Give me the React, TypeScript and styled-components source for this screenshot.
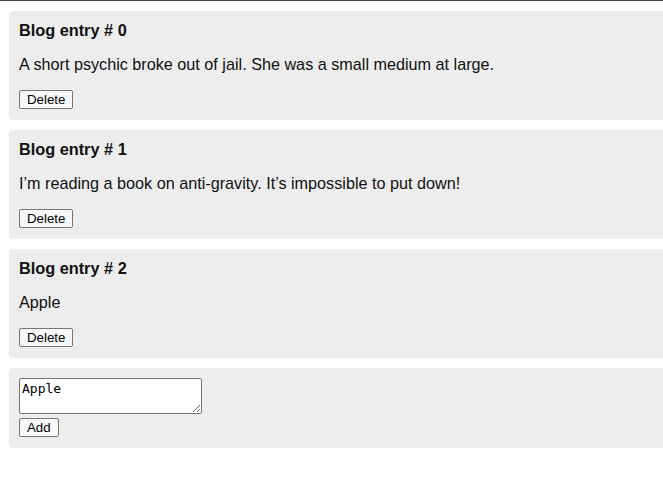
import React, { useState } from 'react';
import styled, { createGlobalStyle } from 'styled-components';

const GlobalStyle = createGlobalStyle`
  body {
    margin: 0;
    font-family: "Liberation Sans", Arial, sans-serif;
    color: #111;
    background: #fff;
    overflow: hidden;
  }
`;

const Page = styled.div`
  border-top: 1px solid #444;
  padding: 10px 0 0 9px;
  display: flex;
  flex-direction: column;
  gap: 10px;
  overflow: hidden;
`;

const Card = styled.div`
  background: #ededed;
  border-radius: 4px;
  width: 700px;
  flex-shrink: 0;
  padding: 10px 10px 11px;
  box-sizing: border-box;
`;

const Title = styled.h3`
  margin: 0;
  font-size: 16.3px;
  font-weight: bold;
  line-height: 19px;
`;

const Body = styled.p`
  margin: 14px 0 16px;
  font-size: 16.2px;
  line-height: 20px;
`;

const Button = styled.button`
  font-family: "Liberation Sans", Arial, sans-serif;
  font-size: 13.3px;
  height: 19px;
  line-height: 15px;
  padding: 0 7px;
  background: #f8f8f8;
  color: #000;
  border: 1px solid #767676;
  border-radius: 2px;
  display: block;
`;

const TextArea = styled.textarea`
  display: block;
  width: 183px;
  height: 36px;
  box-sizing: border-box;
  font-family: "DejaVu Sans Mono", monospace;
  font-size: 13px;
  line-height: 15px;
  padding: 2px;
  border: 1px solid #767676;
  border-radius: 2px;
  margin: 0 0 4px;
`;

const posts = [
  'A short psychic broke out of jail. She was a small medium at large.',
  'I\u2019m reading a book on anti-gravity. It\u2019s impossible to put down!',
  'Apple',
];

export default function App() {
  const [draft, setDraft] = useState('Apple');
  return (
    <>
      <GlobalStyle />
      <Page>
        {posts.map((text, i) => (
          <Card key={i}>
            <Title>Blog entry # {i}</Title>
            <Body>{text}</Body>
            <Button>Delete</Button>
          </Card>
        ))}
        <Card>
          <TextArea value={draft} onChange={(e) => setDraft(e.target.value)} />
          <Button>Add</Button>
        </Card>
      </Page>
    </>
  );
}
